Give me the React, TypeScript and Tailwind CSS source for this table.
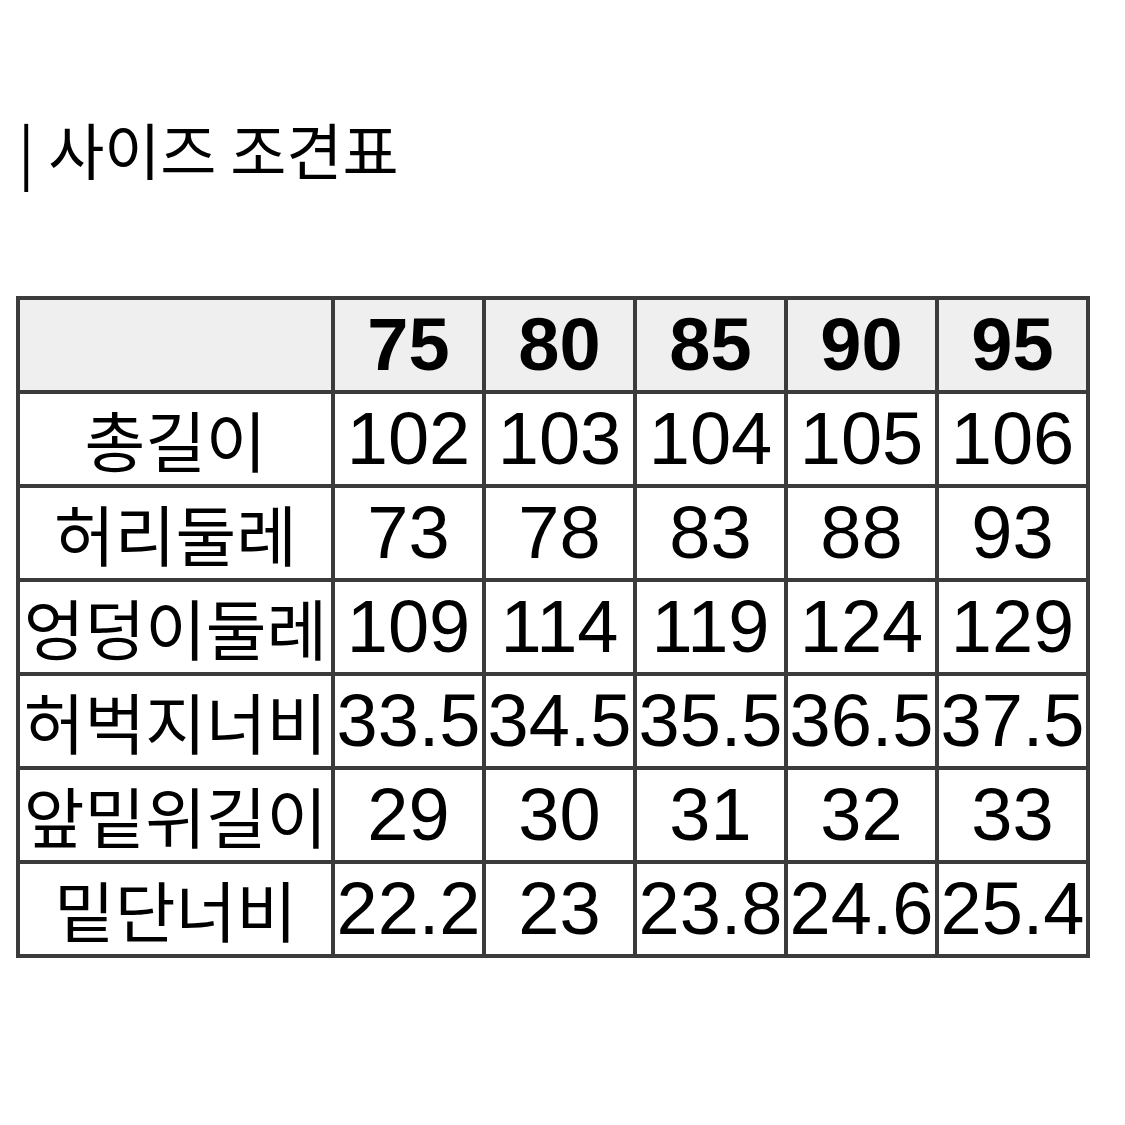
const sizes = ['75', '80', '85', '90', '95'];

const rows: { label: string; values: string[] }[] = [
  { label: '총길이', values: ['102', '103', '104', '105', '106'] },
  { label: '허리둘레', values: ['73', '78', '83', '88', '93'] },
  { label: '엉덩이둘레', values: ['109', '114', '119', '124', '129'] },
  { label: '허벅지너비', values: ['33.5', '34.5', '35.5', '36.5', '37.5'] },
  { label: '앞밑위길이', values: ['29', '30', '31', '32', '33'] },
  { label: '밑단너비', values: ['22.2', '23', '23.8', '24.6', '25.4'] },
];

const kr = "font-['Noto_Sans_CJK_KR',sans-serif]";
const num = "font-['Liberation_Sans','Noto_Sans_CJK_KR',sans-serif]";

export default function App() {
  return (
    <div className="h-[1125px] w-[1125px] bg-white text-black">
      <div className="pl-[18px] pt-[116px]">
        <h1 className={`${kr} text-[61px] font-normal leading-[66px]`}>
          | 사이즈 조견표
        </h1>
      </div>

      <div className="ml-[16px] mt-[114px] w-fit bg-[#3b3b3b] p-[4px]">
        <div className="grid grid-cols-[311px_repeat(5,147px)] auto-rows-[90px] gap-[4px]">
          <div className="bg-[#efefef]" />
          {sizes.map((s) => (
            <div
              key={s}
              className={`${num} flex items-center justify-center bg-[#efefef] text-[74px] font-bold leading-[1.15]`}
            >
              {s}
            </div>
          ))}

          {rows.map((row) => (
            <Row key={row.label} label={row.label} values={row.values} />
          ))}
        </div>
      </div>
    </div>
  );
}

function Row({ label, values }: { label: string; values: string[] }) {
  return (
    <>
      <div
        className={`${kr} flex items-center justify-center whitespace-nowrap bg-white text-[66px] leading-[1.2]`}
      >
        {label}
      </div>
      {values.map((v, i) => (
        <div
          key={i}
          className={`${num} flex items-center justify-center whitespace-nowrap bg-white text-[74px] leading-[1.15]`}
        >
          {v}
        </div>
      ))}
    </>
  );
}
